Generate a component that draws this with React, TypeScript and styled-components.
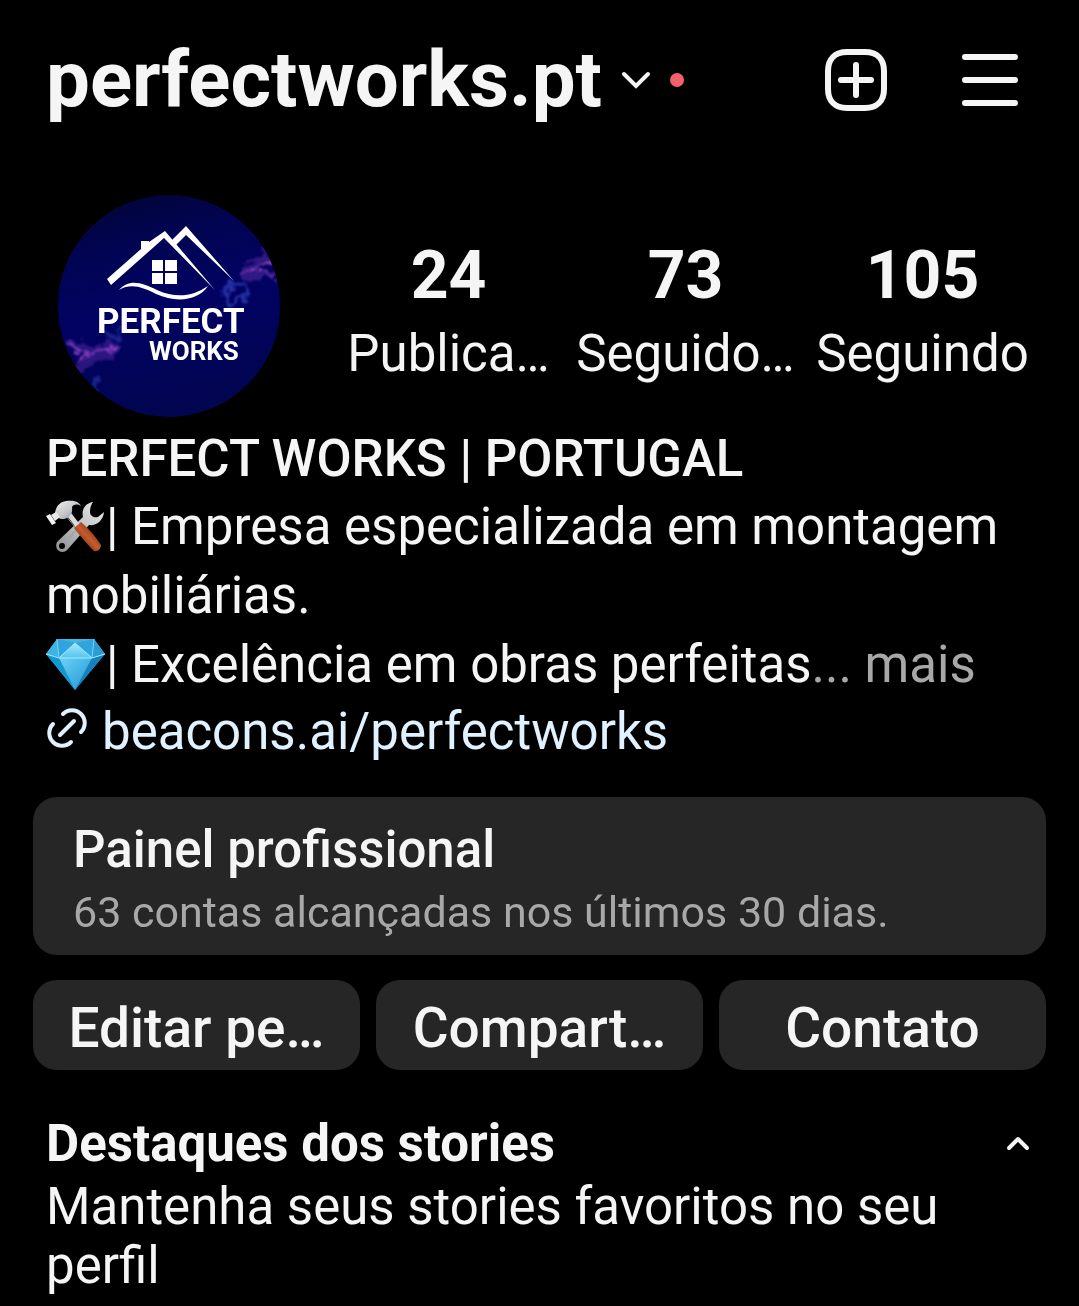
import React from "react";
import styled, { createGlobalStyle } from "styled-components";

const GlobalStyle = createGlobalStyle`
  * { box-sizing: border-box; }
  html { background: #000; }
  body {
    margin: 0;
    background: #000;
    color: #f5f5f5;
    font-family: Roboto, "Noto Sans", sans-serif;
    font-size: 51px;
  }
  button { font: inherit; color: inherit; background: none; border: 0; padding: 0; cursor: pointer; }
  h1, h2, p, dl, dt, dd { margin: 0; }
  svg { display: block; flex: none; }
`;

const Page = styled.main`
  padding-bottom: 8px;
  overflow: hidden;
`;

const TopBar = styled.header`
  display: flex;
  align-items: center;
  justify-content: space-between;
  height: 160px;
  padding: 0 60px 0 46px;
`;

const Account = styled.h1`
  font-size: 78px;
  line-height: 94px;
  font-weight: 700;
`;

const AccountButton = styled.button`
  display: flex;
  align-items: center;
  gap: 18px;
`;

const Dot = styled.span`
  width: 14px;
  height: 14px;
  border-radius: 50%;
  background: #f3606c;
`;

const Actions = styled.nav`
  display: flex;
  align-items: center;
  gap: 73px;
`;

const Profile = styled.section`
  display: flex;
  align-items: center;
  gap: 50px;
  margin-top: 35px;
  padding: 0 38px 0 58px;
`;

const Stats = styled.dl`
  flex: 1;
  display: grid;
  grid-template-columns: repeat(3, 1fr);
  padding-top: 12px;
  text-align: center;
`;

const Stat = styled.div`
  display: flex;
  flex-direction: column-reverse;
`;

const StatLabel = styled.dt`
  line-height: 72px;
  white-space: nowrap;
`;

const StatValue = styled.dd`
  font-size: 66px;
  line-height: 84px;
  font-weight: 700;
`;

const Bio = styled.section`
  padding: 9px 46px 0;
  line-height: 69px;
`;

const Name = styled.h2`
  font-size: 51px;
  line-height: 66px;
  font-weight: 500;
`;

const BioLine = styled.p`
  display: flex;
  align-items: center;
  white-space: pre-wrap;
`;

const Muted = styled.span`
  color: #a8a8a8;
`;

const MoreButton = styled.button`
  color: #a8a8a8;
`;

const SiteLink = styled.a`
  display: flex;
  align-items: center;
  gap: 14px;
  line-height: 66px;
  color: #e0f1ff;
  text-decoration: none;

  svg { margin-bottom: 8px; }
`;

const Tools = styled.section`
  display: grid;
  gap: 25px;
  padding: 32px 33px 0;
`;

const Panel = styled.button`
  padding: 20px 40px 14px;
  border-radius: 24px;
  background: #262626;
  text-align: left;
`;

const PanelTitle = styled.span`
  display: block;
  line-height: 66px;
  font-weight: 500;
`;

const PanelText = styled.span`
  display: block;
  font-size: 43px;
  line-height: 58px;
  color: #a8a8a8;
`;

const ButtonRow = styled.div`
  display: grid;
  grid-template-columns: repeat(3, 1fr);
  gap: 16px;
`;

const PillButton = styled.button`
  height: 90px;
  padding: 6px 8px 0;
  border-radius: 24px;
  background: #262626;
  font-size: 55px;
  font-weight: 500;
  white-space: nowrap;
`;

const Highlights = styled.section`
  padding: 41px 46px 0;
  line-height: 59px;
`;

const HighlightsHead = styled.div`
  display: flex;
  align-items: center;
  justify-content: space-between;
  padding-right: 3px;
`;

const HighlightsTitle = styled.h2`
  font-size: 51px;
  line-height: 66px;
  font-weight: 700;
`;

const Avatar = () => (
  <svg width="222" height="222" viewBox="0 0 222 222" role="img" aria-label="Perfect Works">
    <defs>
      <clipPath id="disc"><circle cx="111" cy="111" r="111" /></clipPath>
      <linearGradient id="sky" x1="0.35" y1="0" x2="0.6" y2="1">
        <stop offset="0" stopColor="#02043a" />
        <stop offset="0.2" stopColor="#010452" />
        <stop offset="0.5" stopColor="#010263" />
        <stop offset="1" stopColor="#02054e" />
      </linearGradient>
      <filter id="smoke" x="-30%" y="-30%" width="160%" height="160%">
        <feTurbulence type="fractalNoise" baseFrequency="0.09" numOctaves="4" seed="7" result="n" />
        <feDisplacementMap in="SourceGraphic" in2="n" scale="18" xChannelSelector="R" yChannelSelector="G" />
        <feGaussianBlur stdDeviation="1" />
      </filter>
    </defs>
    <g clipPath="url(#disc)">
      <rect width="222" height="222" fill="url(#sky)" />
      <g filter="url(#smoke)" fill="none" strokeLinecap="round">
        <path d="M186 74c8-10 18-4 24-12s6-10 8-18M188 82c12-8 20 2 34-2" stroke="#6a30b0" strokeWidth="9" opacity="0.45" />
        <path d="M184 78c12-12 20-4 38-14M200 74l22 14M206 70l14-6" stroke="#a850d8" strokeWidth="2" opacity="0.8" />
        <path d="M174 88c-8 6-8 14-2 20 8 0 18-4 16-12s-6-8-14-6" stroke="#3c4cc8" strokeWidth="4" opacity="0.6" />
        <path d="M10 150c10-4 16 6 28 4s14-6 18 0-14 6-22 10-10 8-16 14" stroke="#5f2cab" strokeWidth="9" opacity="0.45" />
        <path d="M10 152c10 0 14 12 26 6s16-4 20-2M18 168c8-8 14-6 24-12M12 146l14 14" stroke="#a950d6" strokeWidth="2" opacity="0.8" />
        <path d="M48 138c4 8 14 4 16-4M36 184c6 6 4 10 2 18" stroke="#3340b4" strokeWidth="4" opacity="0.5" />
      </g>
      <g fill="#fff">
        <path d="M49 84 83 54V46h8v1L107 36l50 59-51-52L53 90z" />
        <path d="m114 45 14-14 48 55-48-46-10 10z" />
        <path d="M94 65h11v11H94zM107 65h12v11h-12zM94 78h11v11H94zM107 78h12v11h-12z" />
        <path d="M61 95c10-12 24-7 38 0 20 9 36 6 51-4-10 15-32 17-52 8-14-7-25-11-37-4z" />
      </g>
      <text fill="#fff" fontFamily="Roboto, sans-serif" fontWeight="700">
        <tspan x="39" y="138" fontSize="35">PERFECT</tspan>
        <tspan x="91" y="165" fontSize="26">WORKS</tspan>
      </text>
    </g>
  </svg>
);

const ChevronDown = () => (
  <svg width="32" height="20" viewBox="0 0 32 20" fill="none" stroke="#f5f5f5" strokeWidth="4" strokeLinecap="round" aria-hidden="true">
    <path d="M4 4 16 16 28 4" />
  </svg>
);

const ChevronUp = () => (
  <svg width="24" height="16" viewBox="0 0 24 16" fill="none" stroke="#f5f5f5" strokeWidth="4" strokeLinecap="round" strokeLinejoin="round" aria-hidden="true">
    <path d="M3 12 12 3l9 9" />
  </svg>
);

const PlusSquare = () => (
  <svg width="64" height="64" viewBox="0 0 64 64" fill="none" stroke="#f5f5f5" strokeWidth="6" strokeLinecap="round" aria-hidden="true">
    <path d="M23 4h18c12 0 19 7 19 19v18c0 12-7 19-19 19H23C11 60 4 53 4 41V23C4 11 11 4 23 4z" />
    <path d="M32 17v30M17 32h30" />
  </svg>
);

const MenuLines = () => (
  <svg width="58" height="54" viewBox="0 0 58 54" fill="none" stroke="#f5f5f5" strokeWidth="6" strokeLinecap="round" aria-hidden="true">
    <path d="M4 4h50M4 27h50M4 50h50" />
  </svg>
);

const HammerWrench = () => (
  <svg width="60" height="54" viewBox="0 0 60 54" role="img" aria-label="🛠️">
    <defs>
      <linearGradient id="steel" x1="0" y1="0" x2="1" y2="1">
        <stop offset="0" stopColor="#f4f4f4" />
        <stop offset="0.5" stopColor="#c9cacc" />
        <stop offset="1" stopColor="#8d9093" />
      </linearGradient>
      <linearGradient id="shaft" x1="1" y1="0" x2="0" y2="1">
        <stop offset="0" stopColor="#f0f0f0" />
        <stop offset="1" stopColor="#8b8e92" />
      </linearGradient>
      <linearGradient id="wood" x1="0" y1="1" x2="1" y2="0">
        <stop offset="0.2" stopColor="#6f2a10" />
        <stop offset="0.5" stopColor="#c65c2e" />
        <stop offset="0.8" stopColor="#7d3114" />
      </linearGradient>
    </defs>
    <path fill="url(#shaft)" fillRule="evenodd" d="M47 2C40 3 35 9 37 17L12 41c-3 3-2 8 1 10s7 1 9-2l21-24c7 1 14-4 15-13l-6 5c-4 1-8-1-8-5s1-7 3-10zM16 43a3 3 0 1 1 0 6 3 3 0 0 1 0-6z" />
    <path stroke="#a3a6a9" strokeWidth="2" strokeLinecap="round" d="M24 37l7-8" />
    <path stroke="#d9dadc" strokeWidth="5" d="M22 13l10 13" />
    <path stroke="#8d9093" strokeWidth="1" d="M20 16l9 11" />
    <path fill="url(#wood)" d="m28 28 7-6c8 7 14 14 20 23 0 4-4 7-7 6-7-7-13-14-20-23z" />
    <path fill="url(#steel)" d="M9 13C10 6 14 2 20 1c7-1 13 0 15 5-4-2-7-2-9 1 1 6-2 11-8 12-3 0-5 0-6-2l-4 2z" />
    <path fill="#e9eaeb" d="m5 15 5-3 4 5-5 4z" />
    <path fill="#f3f3f3" d="m0 16 4-2 6 9-4 2z" />
  </svg>
);

const Gem = () => (
  <svg width="60" height="54" viewBox="0 0 60 54" role="img" aria-label="💎">
    <defs>
      <linearGradient id="gemFront" x1="0" y1="0" x2="1" y2="1">
        <stop offset="0" stopColor="#6fd2f6" />
        <stop offset="1" stopColor="#1c96d2" />
      </linearGradient>
      <linearGradient id="gemTop" x1="0" y1="0" x2="0" y2="1">
        <stop offset="0" stopColor="#a5e9fc" />
        <stop offset="1" stopColor="#55c4ee" />
      </linearGradient>
    </defs>
    <path d="M11 1h37l11 15-30 36L0 16z" fill="#2ea6dd" />
    <path d="M0 16 11 1l2 19z" fill="#3cb5e6" />
    <path d="M48 1 59 16l-13 4z" fill="#2c9cd4" />
    <path d="M11 1h37L29 5z" fill="#42b5e5" />
    <path d="M13 20 29 5l17 15z" fill="url(#gemTop)" />
    <path d="M13 20h33L29 52z" fill="url(#gemFront)" />
    <path d="M0 16l13 4 16 32z" fill="#1498d2" />
    <path d="M46 20l13-4-30 36z" fill="#1581bd" />
    <path d="M0 16 13 20h33l13-4M13 20 29 5l17 15" fill="none" stroke="#a5ebff" strokeWidth="1" />
    <path d="M13 20 11 1M46 20l2-19" fill="none" stroke="#7ad6f6" strokeWidth="1" />
  </svg>
);

const LinkIcon = () => (
  <svg width="42" height="42" viewBox="0 0 42 42" fill="none" stroke="#e0f1ff" strokeWidth="4" strokeLinecap="round" aria-hidden="true">
    <path d="M17 7A12 12 0 0 1 35 25" />
    <path d="M7 17A12 12 0 0 0 25 35" />
    <path d="M14 28 28 14" />
  </svg>
);

const stats = [
  { value: 24, label: "Publica…" },
  { value: 73, label: "Seguido…" },
  { value: 105, label: "Seguindo" },
];

const profileActions = ["Editar pe…", "Compart…", "Contato"];

export default function App() {
  return (
    <Page>
      <GlobalStyle />
      <TopBar>
        <Account>
          <AccountButton type="button">
            perfectworks.pt
            <ChevronDown />
            <Dot />
          </AccountButton>
        </Account>
        <Actions>
          <button type="button" aria-label="Criar"><PlusSquare /></button>
          <button type="button" aria-label="Menu"><MenuLines /></button>
        </Actions>
      </TopBar>

      <Profile>
        <Avatar />
        <Stats>
          {stats.map((s) => (
            <Stat key={s.label}>
              <StatLabel>{s.label}</StatLabel>
              <StatValue>{s.value}</StatValue>
            </Stat>
          ))}
        </Stats>
      </Profile>

      <Bio>
        <Name>PERFECT WORKS | PORTUGAL</Name>
        <BioLine><HammerWrench />| Empresa especializada em montagem</BioLine>
        <BioLine>mobiliárias.</BioLine>
        <BioLine>
          <Gem />
          <span>| Excelência em obras perfeitas<Muted>... </Muted><MoreButton type="button">mais</MoreButton></span>
        </BioLine>
        <SiteLink href="#beacons"><LinkIcon />beacons.ai/perfectworks</SiteLink>
      </Bio>

      <Tools>
        <Panel type="button">
          <PanelTitle>Painel profissional</PanelTitle>
          <PanelText>63 contas alcançadas nos últimos 30 dias.</PanelText>
        </Panel>
        <ButtonRow>
          {profileActions.map((label) => (
            <PillButton type="button" key={label}>{label}</PillButton>
          ))}
        </ButtonRow>
      </Tools>

      <Highlights>
        <HighlightsHead>
          <HighlightsTitle>Destaques dos stories</HighlightsTitle>
          <button type="button" aria-label="Recolher destaques"><ChevronUp /></button>
        </HighlightsHead>
        <p>Mantenha seus stories favoritos no seu perfil</p>
      </Highlights>
    </Page>
  );
}
